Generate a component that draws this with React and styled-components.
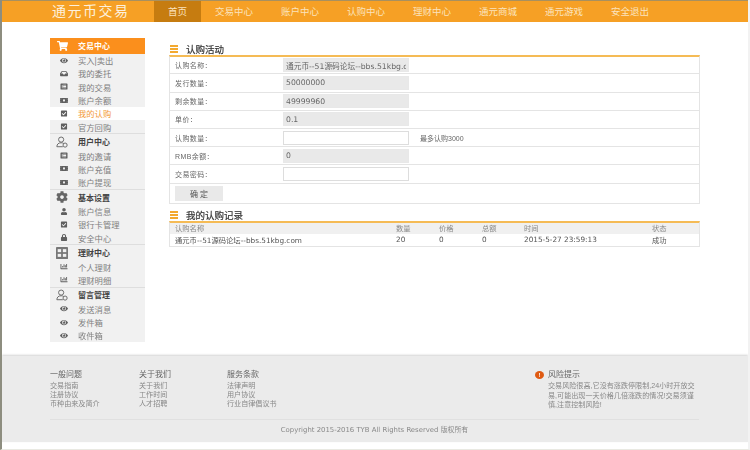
import React from "react";
import styled, { createGlobalStyle } from "styled-components";
import {
  FaShoppingCart,
  FaEye,
  FaInbox,
  FaListAlt,
  FaMoneyBill,
  FaCheckSquare,
  FaUser,
  FaLock,
  FaCog,
  FaChartBar,
} from "react-icons/fa";

const orange = "#f6a025";
const fontStack = `"Liberation Sans", "Noto Sans CJK SC", sans-serif`;
const latinStack = `"DejaVu Sans", "Noto Sans CJK SC", sans-serif`;

const GlobalStyle = createGlobalStyle`
  html, body {
    margin: 0;
    padding: 0;
    background: #fff;
    overflow: hidden;
  }
  * {
    box-sizing: border-box;
  }
`;

const Page = styled.div`
  width: 750px;
  height: 450px;
  border-left: 2px solid #8d8d7f;
  border-right: 2px solid #f2f2f2;
  border-bottom: 1px solid #e9e9e2;
  font-family: ${fontStack};
  color: #555;
  overflow: hidden;
  filter: blur(0.45px);
`;

const Header = styled.header`
  height: 22px;
  background: ${orange};
  border-top: 1px solid #a8905f;
  display: flex;
  align-items: stretch;
  padding-left: 50px;
`;

const Logo = styled.div`
  width: 102px;
  font-size: 14px;
  line-height: 20px;
  letter-spacing: 1.5px;
  color: #fdf0dc;
`;

const NavItem = styled.a`
  padding: 0 14px;
  font-size: 9.5px;
  line-height: 22px;
  color: #fbe3bd;
  background: ${(p) => (p.$active ? "#c67c10" : "transparent")};
`;

const Content = styled.div`
  display: flex;
  align-items: flex-start;
  gap: 24px;
  padding: 16px 0 0 48px;
  height: 334px;
`;

const Sidebar = styled.aside`
  width: 95px;
  background: #f1f1f1;
  flex-shrink: 0;
`;

const SideTop = styled.div`
  height: 15.5px;
  background: #fb8f1c;
  color: #fff;
  display: flex;
  align-items: center;
  font-size: 8px;
  font-weight: bold;
  padding-left: 7px;
  svg {
    width: 11px;
    height: 10px;
    margin-right: 10px;
  }
`;

const SideSection = styled.div`
  height: 15.5px;
  display: flex;
  align-items: center;
  border-top: 1px solid #dedede;
  font-size: 8px;
  font-weight: bold;
  color: #444;
  padding-left: 6px;
  svg {
    width: 12px;
    height: 12px;
    color: #666;
    margin-right: 10px;
  }
`;

const SideItem = styled.div`
  height: 13.33px;
  display: flex;
  align-items: center;
  font-size: 8.3px;
  color: ${(p) => (p.$active ? "#f39a3a" : "#808080")};
  background: ${(p) => (p.$active ? "#fff" : "transparent")};
  padding-left: 10px;
  svg {
    width: 8px;
    height: 7px;
    color: #5f5f5f;
    margin-right: 10px;
  }
`;

const Main = styled.main`
  width: 531px;
`;

const TitleRow = styled.h3`
  margin: 5px 0 0;
  height: 12px;
  display: flex;
  align-items: center;
  font-size: 9.5px;
  font-weight: normal;
  color: #333;
  -webkit-text-stroke: 0.2px #333;
`;

const Bars = styled.span`
  width: 8px;
  height: 8px;
  margin: 0 8px 0 1px;
  background: repeating-linear-gradient(
    to bottom,
    #f3a92f 0,
    #f3a92f 2px,
    #fff 2px,
    #fff 3px
  );
`;

const Panel = styled.div`
  border: 1px solid #e4e4e4;
  border-top: 2px solid #f5bb55;
  margin-bottom: 3px;
`;

const FormRow = styled.div`
  height: 18.2px;
  display: flex;
  align-items: center;
  border-bottom: 1px solid #e4e4e4;
  padding-left: 5px;
  font-size: 7px;
  color: #666;
  &:first-child {
    height: 17.4px;
  }
  &:last-child {
    border-bottom: none;
    height: 19.4px;
  }
`;

const Label = styled.span`
  width: 108px;
  letter-spacing: 0.4px;
`;

const Field = styled.input`
  width: 126px;
  height: 14px;
  padding: 0 2px;
  border: 1px solid ${(p) => (p.readOnly ? "#e8e8e8" : "#ddd")};
  background: ${(p) => (p.readOnly ? "#e9e9e9" : "#fff")};
  font-family: ${latinStack};
  font-size: 7.7px;
  color: #666;
  outline: none;
`;

const Hint = styled.span`
  margin-left: 11px;
  font-size: 7px;
  color: #666;
`;

const Submit = styled.button`
  width: 48px;
  height: 15px;
  border: none;
  background: #e9e9e9;
  font-family: ${fontStack};
  font-size: 8px;
  color: #555;
  padding: 0;
`;

const RecordRow = styled.div`
  height: ${(p) => (p.$head ? "11px" : "12px")};
  display: grid;
  grid-template-columns: 221px 43px 43px 42px 128px 1fr;
  align-items: center;
  padding-left: 5px;
  background: ${(p) => (p.$head ? "#f0f0f0" : "#fff")};
  font-family: ${(p) => (p.$head ? fontStack : latinStack)};
  font-size: 7.3px;
  color: ${(p) => (p.$head ? "#888" : "#555")};
`;

const Footer = styled.footer`
  height: 86px;
  background: #ebebeb;
  box-shadow: 0 -1px 2px rgba(0, 0, 0, 0.18);
  padding: 14px 49px 0 48px;
`;

const FooterCols = styled.div`
  display: flex;
  height: 50px;
  border-bottom: 1px solid #e0e0e0;
`;

const FooterCol = styled.div`
  width: ${(p) => p.$width}px;
`;

const FooterHead = styled.div`
  font-size: 8px;
  line-height: 10px;
  color: #666;
  margin-bottom: 2px;
  display: flex;
  align-items: center;
`;

const FooterLink = styled.div`
  font-size: 7.1px;
  line-height: 9px;
  color: #888;
`;

const RiskBadge = styled.span`
  width: 9px;
  height: 8px;
  margin: 0 4px 0 -13px;
  border-radius: 50%;
  background: #df5a12;
  color: #fff;
  font-size: 6px;
  line-height: 8px;
  text-align: center;
  font-weight: bold;
`;

const RiskText = styled.div`
  width: 148px;
  font-size: 7.1px;
  line-height: 9.5px;
  color: #888;
`;

const Copyright = styled.div`
  padding-top: 6px;
  text-align: center;
  font-family: ${latinStack};
  font-size: 6.9px;
  line-height: 9px;
  color: #888;
`;

// outline person with a small check badge, used by two sidebar sections
const PersonIcon = () => (
  <svg viewBox="0 0 14 14" fill="none" stroke="currentColor" strokeWidth="1.1">
    <circle cx="6" cy="4.2" r="3" />
    <path d="M1 12.5c0-3 2-4.6 5-4.6 1.2 0 2.2.3 3 .8" />
    <path d="M1 12.5h7" />
    <circle cx="10.6" cy="10.6" r="2.4" />
  </svg>
);

const BlocksIcon = () => (
  <svg viewBox="0 0 14 14">
    <rect width="14" height="14" rx="1" fill="#777" />
    <rect x="2" y="2.5" width="4" height="3.5" fill="#f1f1f1" />
    <rect x="8" y="2.5" width="4" height="3.5" fill="#f1f1f1" />
    <rect x="2" y="8" width="4" height="3.5" fill="#f1f1f1" />
    <rect x="8" y="8" width="4" height="3.5" fill="#f1f1f1" />
  </svg>
);

const navItems = ["首页", "交易中心", "账户中心", "认购中心", "理财中心", "通元商城", "通元游戏", "安全退出"];

const sideMenu = [
  {
    title: "交易中心",
    icon: FaShoppingCart,
    top: true,
    items: [
      { label: "买入|卖出", icon: FaEye },
      { label: "我的委托", icon: FaInbox },
      { label: "我的交易", icon: FaListAlt },
      { label: "账户余额", icon: FaMoneyBill },
      { label: "我的认购", icon: FaCheckSquare, active: true },
      { label: "官方回购", icon: FaCheckSquare },
    ],
  },
  {
    title: "用户中心",
    icon: PersonIcon,
    items: [
      { label: "我的邀请", icon: FaListAlt },
      { label: "账户充值", icon: FaMoneyBill },
      { label: "账户提现", icon: FaMoneyBill },
    ],
  },
  {
    title: "基本设置",
    icon: FaCog,
    items: [
      { label: "账户信息", icon: FaUser },
      { label: "银行卡管理", icon: FaCheckSquare },
      { label: "安全中心", icon: FaLock },
    ],
  },
  {
    title: "理财中心",
    icon: BlocksIcon,
    items: [
      { label: "个人理财", icon: FaChartBar },
      { label: "理财明细", icon: FaChartBar },
    ],
  },
  {
    title: "留言管理",
    icon: PersonIcon,
    items: [
      { label: "发送消息", icon: FaEye },
      { label: "发件箱", icon: FaEye },
      { label: "收件箱", icon: FaEye },
    ],
  },
];

const formRows = [
  { label: "认购名称：", value: "通元币--51源码论坛--bbs.51kbg.com", readOnly: true },
  { label: "发行数量：", value: "50000000", readOnly: true },
  { label: "剩余数量：", value: "49999960", readOnly: true },
  { label: "单价：", value: "0.1", readOnly: true },
  { label: "认购数量：", value: "", hint: "最多认购3000" },
  { label: "RMB余额：", value: "0", readOnly: true },
  { label: "交易密码：", value: "" },
];

const footerCols = [
  { title: "一般问题", width: 89, links: ["交易指南", "注册协议", "币种由来及简介"] },
  { title: "关于我们", width: 88, links: ["关于我们", "工作时间", "人才招聘"] },
  { title: "服务条款", width: 321, links: ["法律声明", "用户协议", "行业自律倡议书"] },
];

const App = () => {
  return (
    <Page>
      <GlobalStyle />
      <Header>
        <Logo>通元币交易</Logo>
        {navItems.map((item, i) => (
          <NavItem key={item} $active={i === 0}>
            {item}
          </NavItem>
        ))}
      </Header>

      <Content>
        <Sidebar>
          {sideMenu.map((group) => {
            const Heading = group.top ? SideTop : SideSection;
            const GroupIcon = group.icon;
            return (
              <div key={group.title}>
                <Heading>
                  <GroupIcon />
                  {group.title}
                </Heading>
                {group.items.map((item) => {
                  const ItemIcon = item.icon;
                  return (
                    <SideItem key={item.label} $active={item.active}>
                      <ItemIcon />
                      {item.label}
                    </SideItem>
                  );
                })}
              </div>
            );
          })}
        </Sidebar>

        <Main>
          <TitleRow>
            <Bars />
            认购活动
          </TitleRow>
          <Panel>
            {formRows.map((row) => (
              <FormRow key={row.label}>
                <Label>{row.label}</Label>
                <Field value={row.value} readOnly={row.readOnly} onChange={() => {}} />
                {row.hint && <Hint>{row.hint}</Hint>}
              </FormRow>
            ))}
            <FormRow>
              <Submit>确 定</Submit>
            </FormRow>
          </Panel>

          <TitleRow>
            <Bars />
            我的认购记录
          </TitleRow>
          <Panel>
            <RecordRow $head>
              <span>认购名称</span>
              <span>数量</span>
              <span>价格</span>
              <span>总额</span>
              <span>时间</span>
              <span>状态</span>
            </RecordRow>
            <RecordRow>
              <span>通元币--51源码论坛--bbs.51kbg.com</span>
              <span>20</span>
              <span>0</span>
              <span>0</span>
              <span>2015-5-27 23:59:13</span>
              <span>成功</span>
            </RecordRow>
          </Panel>
        </Main>
      </Content>

      <Footer>
        <FooterCols>
          {footerCols.map((col) => (
            <FooterCol key={col.title} $width={col.width}>
              <FooterHead>{col.title}</FooterHead>
              {col.links.map((link) => (
                <FooterLink key={link}>{link}</FooterLink>
              ))}
            </FooterCol>
          ))}
          <FooterCol $width={150}>
            <FooterHead>
              <RiskBadge>!</RiskBadge>
              风险提示
            </FooterHead>
            <RiskText>
              交易风险很高,它没有涨跌停限制,24小时开放交易,可能出现一天价格几倍涨跌的情况!交易须谨慎,注意控制风险!
            </RiskText>
          </FooterCol>
        </FooterCols>
        <Copyright>Copyright 2015-2016 TYB All Rights Reserved 版权所有</Copyright>
      </Footer>
    </Page>
  );
};

export default App;
